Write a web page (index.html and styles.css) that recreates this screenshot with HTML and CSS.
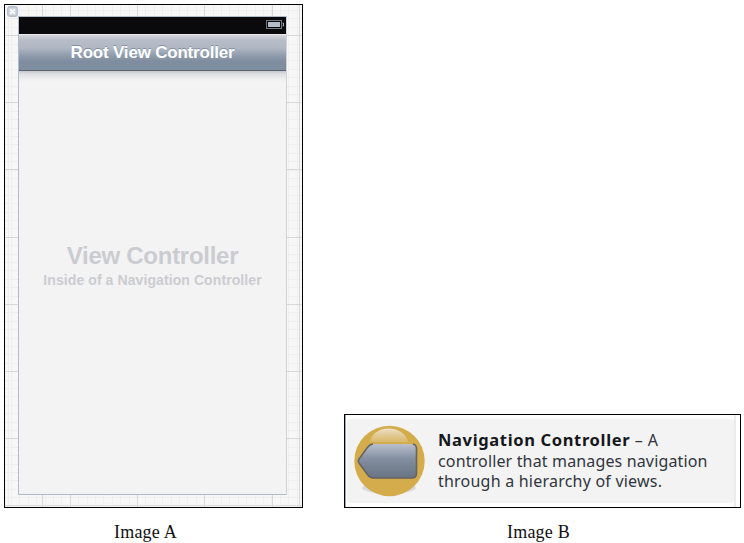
FILE: index.html
```
<!DOCTYPE html>
<html lang="en">
<head>
<meta charset="utf-8">
<title>Navigation Controller</title>
<link rel="stylesheet" href="styles.css">
</head>
<body>
<main class="figures">
  <figure class="figure">
    <div class="canvas">
      <svg class="close" width="11" height="11" viewBox="0 0 11 11"><rect x=".75" y=".75" width="9.5" height="9.5" rx="2" fill="#d2d6dc" stroke="#b4bcca" stroke-width="1.3"/><path d="M3.3 3.3l4.4 4.4M7.7 3.3L3.3 7.7" stroke="#fff" stroke-width="1.8"/></svg>
      <div class="phone">
        <div class="status">
          <svg width="19" height="10" viewBox="0 0 19 10"><rect x=".5" y=".5" width="15" height="8" fill="#0a0a0d" stroke="#72777d"/><rect x="2" y="2" width="12" height="5" fill="#b5bcc9"/><path d="M16.5 3h1v3h-1" fill="none" stroke="#a5acb8"/></svg>
        </div>
        <div class="navbar"><span class="nav-title">Root View Controller</span></div>
        <div class="content">
          <div class="heading">View Controller</div>
          <div class="subheading">Inside of a Navigation Controller</div>
        </div>
      </div>
    </div>
    <figcaption class="caption caption-a">Image A</figcaption>
  </figure>
  <figure class="figure">
    <div class="card">
      <div class="panel">
        <svg class="icon" width="80" height="80" viewBox="0 0 80 80">
          <defs>
            <linearGradient id="arrow" x1="0" y1="0" x2="0" y2="1"><stop offset="0" stop-color="#b9c0cc"/><stop offset=".42" stop-color="#8491a3"/><stop offset=".55" stop-color="#7d8999"/><stop offset="1" stop-color="#687382"/></linearGradient>
            <linearGradient id="shine" x1="0" y1="0" x2="0" y2="1"><stop offset="0" stop-color="#eee5d2" stop-opacity=".95"/><stop offset="1" stop-color="#dfc78e" stop-opacity=".5"/></linearGradient>
          </defs>
          <ellipse cx="42" cy="69" rx="27" ry="5.500" fill="#d9dadd"/>
          <circle cx="42.500" cy="42" r="35.200" fill="#d5ac4b"/>
          <path d="M23 23C26 5 57 5 61 23Z" fill="url(#shine)"/>
          <path d="M26 25H64Q69.500 25 69.500 29.500V54Q69.500 59 65 59H26Q23 59 20 55L12 44Q10.500 42 12 40L20 29Q23 25 26 25Z" fill="url(#arrow)"/>
          <path d="M66 25Q69.500 26 69.500 29.500V54Q69.500 59 65 59H26Q23 59 20 55L12 44Q10.500 42 12 40L20 29Q23 25 26 25" fill="none" stroke="#666463" stroke-width="1.600"/>
        </svg>
        <div class="description"><div class="line line-1"><b>Navigation Controller</b> – A</div><div class="line line-2">controller that manages navigation</div><div class="line line-3">through a hierarchy of views.</div></div>
      </div>
    </div>
    <figcaption class="caption caption-b">Image B</figcaption>
  </figure>
</main>
</body>
</html>
```
FILE: styles.css
```
* { box-sizing: border-box; }
body { margin: 0; background: #fff; width: 744px; height: 543px; overflow: hidden; }
.figures { display: flex; align-items: flex-end; gap: 41px; padding: 4px 0 0 4px; }
.figure { margin: 0; }
.canvas {
  position: relative;
  width: 299px;
  height: 504px;
  border: 1px solid #000;
  padding: 11px 0 0 13px;
  background:
    linear-gradient(#d8d8d8, #d8d8d8) 294px 0 / 1px 100% no-repeat,
    linear-gradient(#dedede, #dedede) 0 500px / 100% 1px no-repeat,
    repeating-linear-gradient(90deg, #d5d7da 0 1px, transparent 1px 67.2px) 65px 0,
    repeating-linear-gradient(#d5d7da 0 1px, transparent 1px 67.2px) 0 30px,
    repeating-linear-gradient(90deg, #efefef 0 1px, transparent 1px 8.4px) 6px 0,
    repeating-linear-gradient(#efefef 0 1px, transparent 1px 8.4px) 0 5px,
    #f7f7f7;
}
.close { position: absolute; left: 2px; top: 1px; }
.phone {
  width: 269px;
  height: 479px;
  border: 1px solid #b1bccb;
  border-right-color: #cfd1d4;
  background: #f3f3f3;
  display: flex;
  flex-direction: column;
}
.status { height: 17px; background: #0a0a0d; display: flex; justify-content: flex-end; padding: 3px 1px 0; flex: none; }
.navbar {
  height: 37px;
  flex: none;
  border-top: 1px solid #f0e8ee;
  border-bottom: 1px solid #60636a;
  background: linear-gradient(#d3d5da 0, #b7bdc8 15%, #b0b8c4 36%, #8c99aa 62%, #7f8da0 75%, #7f8da0 100%);
  display: flex;
  justify-content: center;
}
.nav-title, .heading, .subheading { font-family: "Liberation Sans", sans-serif; font-weight: bold; white-space: nowrap; }
.nav-title { font-size: 17px; line-height: 36px; letter-spacing: -.2px; color: #fff; text-shadow: 0 -1px 0 #8390a1; }
.content { flex: 1; text-align: center; padding-top: 171px; background: linear-gradient(#c1c5ce 0, #dfe0e3 3px, #f3f3f3 10px); }
.heading { font-size: 24px; line-height: 28px; letter-spacing: -.27px; color: #cbccd1; }
.subheading { font-size: 14px; line-height: 20px; letter-spacing: .09px; color: #cbccd1; }
.caption { font: 18px/20px "Liberation Serif", serif; letter-spacing: .2px; color: #111; height: 31px; padding-top: 14px; white-space: nowrap; }
.caption-a { padding-left: 110px; }
.caption-b { padding-left: 163px; }
.card { width: 397px; height: 94px; border: 1px solid #000; padding: 4px 6px 4px 1px; background: linear-gradient(90deg, #9ba8b9 0 1px, #fff 1px 389px, #ececef 389px 391px, #fff 391px); }
.panel { height: 84px; margin-left: 1px; border-radius: 4px; background: #f3f3f3; display: flex; }
.icon { flex: none; }
.description { font: 16px/20.700px "Noto Sans", sans-serif; color: #303540; padding: 11px 0 0 11px; }
.line { height: 20.700px; white-space: nowrap; }
.line-1 { letter-spacing: .4px; }
.line-2 { letter-spacing: .15px; }
.line-3 { letter-spacing: .22px; }
.line b { font-size: 16.500px; letter-spacing: .65px; color: #15171c; }
```
